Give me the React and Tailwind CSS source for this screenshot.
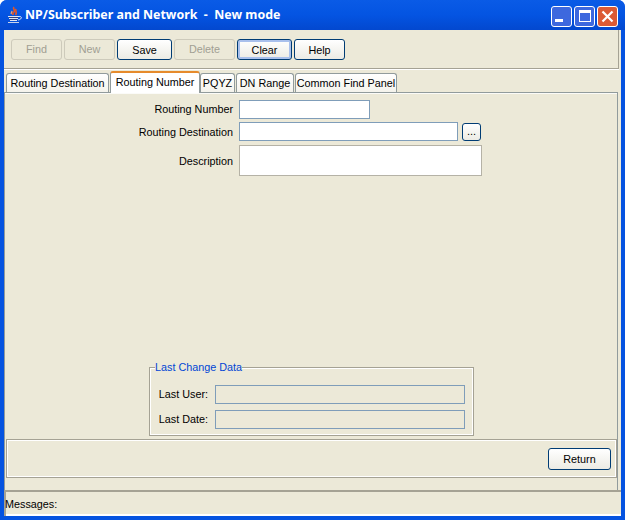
import { useState } from 'react'

const TOOLBAR = [
  { label: 'Find', width: 'w-[51px]', disabled: true },
  { label: 'New', width: 'w-[51px]', disabled: true },
  { label: 'Save', width: 'w-[55px]' },
  { label: 'Delete', width: 'w-[61px]', disabled: true },
  { label: 'Clear', width: 'w-[55px]', focused: true },
  { label: 'Help', width: 'w-[51px]' },
]

const TABS = [
  { label: 'Routing Destination', width: 'w-[103px]' },
  { label: 'Routing Number', width: 'w-[90px]' },
  { label: 'PQYZ', width: 'w-[35px]' },
  { label: 'DN Range', width: 'w-[58px]' },
  { label: 'Common Find Panel', width: 'w-[102px]' },
]

function JavaIcon() {
  return (
    <svg width="17" height="18" viewBox="0 0 17 18" className="shrink-0">
      <path d="M8 1 C6 3 10 4 8 6 C6 7 7 8 7 9 M10 3 C9 5 11 6 10 8 L9.500 9" fill="none" stroke="#e0562a" strokeWidth="1.700" />
      <path d="M6 5 L5 8" stroke="#f0a070" strokeWidth="1.200" />
      <path d="M2 10 H13 V11 H2 Z M3 12 H12 V13 H3 Z M4 14 H11 V15 H4 Z" fill="#dfe6f5" />
      <path d="M3 11 H12 V12 H3 Z M4 13 H11 V14 H4 Z" fill="#34407a" />
      <path d="M13 10.500 C16.500 10 16 13.500 12 14" fill="none" stroke="#dfe6f5" strokeWidth="1" />
      <path d="M2 16 H13 V17 H2 Z" fill="#c8d2ea" />
    </svg>
  )
}

function WindowButton({ close, children }) {
  return (
    <div
      className={`flex h-[21px] w-[21px] items-center justify-center rounded-[3px] border border-white ${
        close ? 'bg-[#dc5a35]' : 'bg-[#3d68de]'
      }`}
    >
      {children}
    </div>
  )
}

function ToolButton({ label, width, disabled, focused }) {
  if (disabled) {
    return (
      <button
        type="button"
        disabled
        className={`${width} h-[21px] rounded-[3px] border border-[#cdcabb] bg-[#ece9d8] pb-[2px] text-[#a19f93]`}
      >
        {label}
      </button>
    )
  }
  return (
    <button
      type="button"
      className={`${width} h-[21px] rounded-[3px] border border-[#003c74] bg-gradient-to-b from-white to-[#ecebe4] text-black ${
        focused ? 'shadow-[inset_0_0_0_2px_#a9c0ec]' : ''
      }`}
    >
      {label}
    </button>
  )
}

export default function App() {
  const [tab] = useState('Routing Number')

  return (
    <div
      className="flex h-[520px] w-[625px] flex-col overflow-hidden rounded-t-[7px] bg-[#0553e0] text-[10.800px] leading-[14px] text-black"
      style={{ fontFamily: '"Liberation Sans", Arial, sans-serif' }}
    >
      <div className="flex h-[30px] shrink-0 items-center bg-gradient-to-b from-[#0a5be6] via-[#0454e2] to-[#0348cf] pl-[6px] pr-[7px]">
        <JavaIcon />
        <span
          className="ml-[2px] flex-1 whitespace-pre text-[12.400px] font-bold text-white"
          style={{ fontFamily: '"Noto Sans", sans-serif' }}
        >
          NP/Subscriber and Network  -  New mode
        </span>
        <div className="mt-[2px] flex gap-[2px]">
          <WindowButton>
            <div className="mt-[9px] mr-[5px] h-[3px] w-[8px] bg-white" />
          </WindowButton>
          <WindowButton>
            <div className="h-[12px] w-[12px] border border-t-[3px] border-white" />
          </WindowButton>
          <WindowButton close>
            <svg width="13" height="13" viewBox="0 0 13 13">
              <path d="M1.500 1.500 L11.500 11.500 M11.500 1.500 L1.500 11.500" stroke="white" strokeWidth="2.200" />
            </svg>
          </WindowButton>
        </div>
      </div>

      <div className="mx-[4px] mb-[4px] flex min-h-0 flex-1 flex-col bg-[#ece9d8]">
        <div className="mr-[2px] flex h-[39px] shrink-0 items-center gap-[2px] border-b border-r border-[#a5a294] pl-[7px] pt-[1px] shadow-[0_1px_0_white]">
          {TOOLBAR.map((b) => (
            <ToolButton key={b.label} {...b} />
          ))}
        </div>

        <div className="relative z-10 mt-[3px] ml-[2px] flex h-[20px] shrink-0 items-end">
          {TABS.map((t) => {
            const active = t.label === tab
            return (
              <div
                key={t.label}
                className={`${t.width} flex items-center justify-center whitespace-nowrap rounded-t-[3px] border border-b-0 ${
                  active
                    ? '-mb-[1px] h-[22px] border-[#919b9c] border-t-2 border-t-[#e68b2c] bg-white pb-[3px]'
                    : 'mr-[1px] h-[19px] border-[#919b9c] bg-gradient-to-b from-white to-[#f4f3ec]'
                }`}
              >
                {t.label}
              </div>
            )
          })}
        </div>

        <div className="mr-[3px] flex min-h-0 flex-1 flex-col border border-[#919b9c] border-b-0 pt-[7px] shadow-[inset_0_1px_0_#fbfbf8]">
          <div className="grid grid-cols-[228px_1fr] items-center gap-x-[6px] gap-y-[3px]">
            <label className="pb-[1px] text-right">Routing Number</label>
            <div className="h-[19px] w-[131px] border border-[#7f9db9] bg-white" />
            <label className="text-right">Routing Destination</label>
            <div className="flex items-center gap-[4px]">
              <div className="h-[19px] w-[219px] border border-[#7f9db9] bg-white" />
              <button
                type="button"
                className="h-[18px] w-[19px] rounded-[3px] border border-[#003c74] bg-gradient-to-b from-white to-[#ecebe4] pb-[4px] text-[11px]"
              >
                ...
              </button>
            </div>
            <label className="pt-[1px] text-right">Description</label>
            <div className="mt-[1px] h-[31px] w-[243px] border border-[#b5b2a6] bg-white" />
          </div>

          <div className="flex-1" />

          <fieldset className="ml-[144px] h-[76px] w-[325px] shrink-0 border border-[#a5a294] px-[5px] shadow-[inset_0_0_0_1px_white]">
            <legend className="bg-[#ece9d8] text-[#0046d5]">Last Change Data</legend>
            <div className="mt-[11px] grid grid-cols-[53px_1fr] items-center gap-x-[7px] gap-y-[6px] pr-[3px]">
              <label className="whitespace-nowrap pb-[2px] text-right">Last User:</label>
              <div className="h-[19px] border border-[#7f9db9]" />
              <label className="whitespace-nowrap pb-[2px] text-right">Last Date:</label>
              <div className="h-[19px] border border-[#7f9db9]" />
            </div>
          </fieldset>

          <div className="ml-[1px] mt-[3px] flex h-[39px] shrink-0 items-center justify-end border border-[#a5a294] pr-[5px] shadow-[inset_0_0_0_1px_white]">
            <button
              type="button"
              className="h-[22px] w-[63px] rounded-[3px] border border-[#003c74] bg-gradient-to-b from-white to-[#ecebe4]"
            >
              Return
            </button>
          </div>
          <div className="h-[12px] shrink-0" />
        </div>

        <div className="flex h-[26px] shrink-0 items-start border-t-2 border-l-2 border-[#a5a294] pt-[5px] shadow-[inset_0_-2px_0_white]">
          <span className="-ml-[1px]">Messages:</span>
        </div>
      </div>
    </div>
  )
}
